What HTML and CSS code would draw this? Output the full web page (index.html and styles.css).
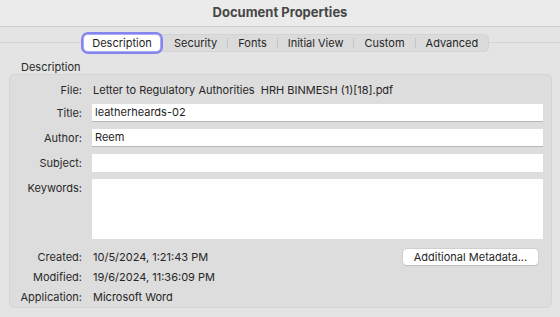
FILE: index.html
```html
<!DOCTYPE html>
<html lang="en">
<head>
  <meta charset="UTF-8">
  <title>Document Properties</title>
  <link rel="stylesheet" href="styles.css">
</head>
<body>
<div class="titlebar">Document Properties</div>

<div class="tabs-row">
  <div class="tabs">
    <div class="tab active">Description</div>
    <div class="tab">Security</div>
    <div class="sep"></div>
    <div class="tab">Fonts</div>
    <div class="sep"></div>
    <div class="tab">Initial View</div>
    <div class="sep"></div>
    <div class="tab">Custom</div>
    <div class="sep"></div>
    <div class="tab">Advanced</div>
  </div>
</div>

<div class="group-title">Description</div>
<div class="group">
  <div class="row file">
    <div class="label">File:</div>
    <div class="value">Letter to Regulatory Authorities&nbsp; HRH BINMESH (1)[18].pdf</div>
  </div>
  <div class="row input-row first">
    <div class="label">Title:</div>
    <div class="field">leatherheards-02</div>
  </div>
  <div class="row input-row">
    <div class="label">Author:</div>
    <div class="field">Reem</div>
  </div>
  <div class="row input-row">
    <div class="label">Subject:</div>
    <div class="field plain"></div>
  </div>
  <div class="row input-row top">
    <div class="label">Keywords:</div>
    <div class="field plain tall"></div>
  </div>
  <div class="row info created">
    <div class="label">Created:</div>
    <div class="value">10/5/2024, 1:21:43 PM</div>
    <button class="meta-btn">Additional Metadata...</button>
  </div>
  <div class="row info">
    <div class="label">Modified:</div>
    <div class="value">19/6/2024, 11:36:09 PM</div>
  </div>
  <div class="row info">
    <div class="label">Application:</div>
    <div class="value">Microsoft Word</div>
  </div>
</div>
</body>
</html>
```

FILE: styles.css
```css
body {
  margin: 0;
  width: 560px;
  height: 317px;
  overflow: hidden;
  background-color: #e4e4e4;
  font-family: Inter, "Liberation Sans", sans-serif;
  font-size: 11px;
  color: #262626;
}
.titlebar {
  height: 27px;
  line-height: 25px;
  text-align: center;
  font-size: 13px;
  font-weight: 700;
  color: #474747;
  background-color: #ebebeb;
  border-bottom: 1px solid #d0d0d0;
  box-sizing: border-box;
}
.tabs-row {
  position: relative;
  display: flex;
  padding: 7px 0 0 82px;
  height: 18px;
}
.tabs-row::before {
  content: "";
  position: absolute;
  left: 0;
  right: 0;
  top: 15px;
  border-top: 1px solid #d3d3d3;
}
.tabs {
  position: relative;
  display: flex;
  align-items: center;
  height: 18px;
  background-color: #dbdbdb;
  border: 1px solid #d3d3d3;
  border-radius: 5px;
  box-sizing: border-box;
}
.tab {
  padding: 0 10px;
  line-height: 16px;
  color: #262626;
}
.tab.active {
  width: 76px;
  height: 16px;
  margin: 0 4px 0 1px;
  padding: 0;
  box-sizing: border-box;
  text-align: center;
  background-color: #fff;
  border-radius: 4px;
  box-shadow: 0 0 0 1px #a9abf6, 0 0 0 3px #8486ee;
  line-height: 16px;
  color: #1e1e1e;
}
.sep {
  width: 1px;
  height: 10px;
  background-color: #c4c4c4;
}
.group-title {
  padding: 8px 0 0 21px;
  height: 14px;
  line-height: 14px;
  color: #2a2a2a;
}
.group {
  margin: 0 8px 0 9px;
  padding: 7px 8px 2px 0;
  height: 234px;
  box-sizing: border-box;
  background-color: #dddddd;
  border: 1px solid #d5d5d5;
  border-radius: 5px;
  display: flex;
  flex-direction: column;
}
.row {
  display: flex;
  align-items: center;
  height: 16px;
}
.row.input-row {
  height: 18px;
  margin-top: 7px;
}
.row.input-row.first {
  margin-top: 6px;
}
.row.top {
  align-items: flex-start;
  height: 60px;
}
.row.top .label {
  padding-top: 2px;
}
.row.info {
  margin-top: 4px;
}
.row.created {
  margin-top: 10px;
}
.label {
  width: 72px;
  flex-shrink: 0;
  text-align: right;
  padding-right: 10px;
  color: #2a2a2a;
}
.value {
  flex: 1;
  padding-left: 1px;
  white-space: nowrap;
}
.field {
  flex: 1;
  height: 18px;
  line-height: 17px;
  padding-left: 3px;
  background-color: #fff;
  border-bottom: 1px solid #b8b8b8;
  box-sizing: border-box;
  color: #1e1e1e;
}
.field.plain {
  border-bottom: none;
}
.field.tall {
  height: 60px;
}
.meta-btn {
  font-family: Inter, "Liberation Sans", sans-serif;
  font-size: 11px;
  color: #262626;
  width: 135px;
  height: 16px;
  padding: 0;
  margin-right: 5px;
  background-color: #fff;
  border: none;
  border-radius: 4px;
  box-shadow: 0 0 0 0.5px #c4c4c4, 0 1px 1px rgba(0,0,0,0.15);
}
```
